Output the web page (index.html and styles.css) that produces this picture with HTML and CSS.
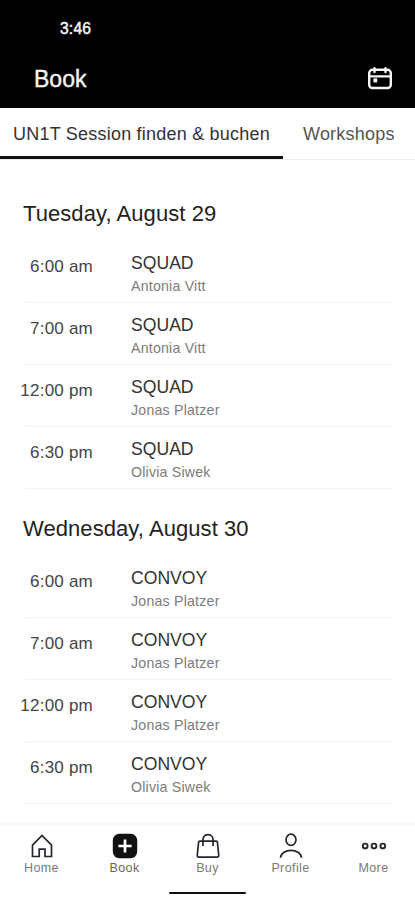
FILE: index.html
```html
<!DOCTYPE html>
<html lang="en">
<head>
<meta charset="utf-8">
<title>Book</title>
<link rel="stylesheet" href="styles.css">
</head>
<body>
<header class="top">
  <div class="clock">3:46</div>
  <div class="bar">
    <h1>Book</h1>
    <svg class="calendar" width="28" height="26" viewBox="0 0 28 26" fill="none" stroke="#f6f6f6" stroke-width="2.4" stroke-linecap="round">
      <rect x="3.2" y="4.8" width="21.6" height="18.2" rx="3.2"/>
      <path d="M3.5 11.4H24.5M8.5 3.2V7M19.5 3.2V7"/>
      <rect x="7.4" y="13.4" width="3.8" height="4" fill="#f6f6f6" stroke="none"/>
    </svg>
  </div>
</header>
<nav class="tabs">
  <a class="tab active">UN1T Session finden &amp; buchen</a>
  <a class="tab">Workshops</a>
</nav>
<main>
  <section>
    <h2>Tuesday, August 29</h2>
    <ul>
      <li><time>6:00 am</time><div><b>SQUAD</b><span>Antonia Vitt</span></div></li>
      <li><time>7:00 am</time><div><b>SQUAD</b><span>Antonia Vitt</span></div></li>
      <li><time>12:00 pm</time><div><b>SQUAD</b><span>Jonas Platzer</span></div></li>
      <li><time>6:30 pm</time><div><b>SQUAD</b><span>Olivia Siwek</span></div></li>
    </ul>
  </section>
  <section>
    <h2>Wednesday, August 30</h2>
    <ul>
      <li><time>6:00 am</time><div><b>CONVOY</b><span>Jonas Platzer</span></div></li>
      <li><time>7:00 am</time><div><b>CONVOY</b><span>Jonas Platzer</span></div></li>
      <li><time>12:00 pm</time><div><b>CONVOY</b><span>Jonas Platzer</span></div></li>
      <li><time>6:30 pm</time><div><b>CONVOY</b><span>Olivia Siwek</span></div></li>
    </ul>
  </section>
</main>
<footer>
  <nav class="menu">
    <a><svg width="28" height="28" viewBox="0 0 28 28"><path d="M4.5 13.2L14 3.5L23.5 13.2V24.5H17V17.2H11.2V24.5H4.5Z"/></svg>Home</a>
    <a class="current"><svg width="28" height="28" viewBox="0 0 28 28"><rect class="solid" x="1.8" y="1.8" width="24.4" height="24.4" rx="6.5"/><path class="plus" d="M14 7.4V20.6M7.4 14H20.6"/></svg>Book</a>
    <a><svg width="28" height="28" viewBox="0 0 28 28"><path d="M5.8 9.2H22.2Q23.2 9.2 23.4 10.2L24.7 22.8Q24.9 25.2 22.6 25.2H5.4Q3.1 25.2 3.3 22.8L4.6 10.2Q4.8 9.2 5.8 9.2ZM9 14V7.2C9 1.2 19 1.2 19 7.2V14"/></svg>Buy</a>
    <a><svg width="28" height="28" viewBox="0 0 28 28"><ellipse cx="14" cy="7.8" rx="5" ry="5.6"/><path d="M3.5 25.8C4.2 15.9 23.8 15.9 24.5 25.8"/></svg>Profile</a>
    <a><svg width="28" height="28" viewBox="0 0 28 28"><g class="dots"><circle cx="5.2" cy="14" r="2.4"/><circle cx="14" cy="14" r="2.4"/><circle cx="22.8" cy="14" r="2.4"/></g></svg>More</a>
  </nav>
  <div class="handle"></div>
</footer>
</body>
</html>
```
FILE: styles.css
```css
* { box-sizing: border-box; margin: 0; padding: 0; }
body {
  width: 415px;
  height: 900px;
  display: flex;
  flex-direction: column;
  overflow: hidden;
  background: #fff;
  color: #222;
  font-family: "Liberation Sans", Arial, sans-serif;
}
.top { height: 108px; flex: none; background: #000; color: #f4f4f4; }
.clock {
  height: 52px;
  padding: 19px 0 0 60px;
  font-size: 15.6px;
  line-height: 19px;
  letter-spacing: 0.2px;
  -webkit-text-stroke: 0.5px #f4f4f4;
}
.bar { height: 52px; display: flex; align-items: center; justify-content: space-between; padding: 0 21px 0 34px; }
h1 { padding-top: 1px; font-size: 23px; line-height: 28px; font-weight: 400; -webkit-text-stroke: 0.4px #f4f4f4; }
.calendar { display: block; }
.tabs { height: 52px; flex: none; display: flex; border-bottom: 1px solid #eee; }
.tab {
  height: 51px;
  padding: 0 20px;
  font-size: 18px;
  line-height: 52px;
  letter-spacing: 0.22px;
  white-space: nowrap;
  color: #555;
}
.tab.active { width: 283px; padding: 0 0 0 13px; color: #333; border-bottom: 3px solid #111; }
main { flex: 1; min-height: 0; padding: 39px 23px 0; }
section { height: 314.5px; }
h2 { height: 42px; font-size: 22px; line-height: 30px; letter-spacing: 0.07px; font-weight: 400; }
ul { list-style: none; }
li { height: 62px; display: flex; margin-left: -5px; padding-top: 12px; position: relative; }
li::after { content: ""; position: absolute; left: 7px; right: 0; bottom: 0; height: 1px; background: #f3f3f3; }
time {
  width: 75px;
  padding-top: 4px;
  text-align: right;
  font-size: 17px;
  line-height: 20px;
  letter-spacing: 0.22px;
  color: #444;
}
li div { margin-left: 38px; }
b { display: block; height: 25px; font-size: 17.6px; line-height: 20px; font-weight: 400; color: #333; }
li span { display: block; font-size: 14.2px; line-height: 16px; letter-spacing: 0.2px; color: #7c7c7c; }
footer { height: 77px; flex: none; border-top: 2px solid #f7f7f7; }
.menu { display: flex; height: 67px; padding-top: 7px; }
.menu a {
  flex: 1;
  display: flex;
  flex-direction: column;
  align-items: center;
  font-size: 12.5px;
  line-height: 16px;
  letter-spacing: 0.4px;
  color: #7a7a7a;
}
.menu .current { color: #666; }
.menu svg { display: block; fill: none; stroke: #252530; stroke-width: 1.7; }
.menu .solid { fill: #111; stroke: none; }
.menu .plus { stroke: #fff; stroke-width: 2.7; }
.menu .dots { stroke-width: 1.9; }
.handle { width: 77px; height: 2px; margin: 0 auto; border-radius: 1px; background: #111; }
```
